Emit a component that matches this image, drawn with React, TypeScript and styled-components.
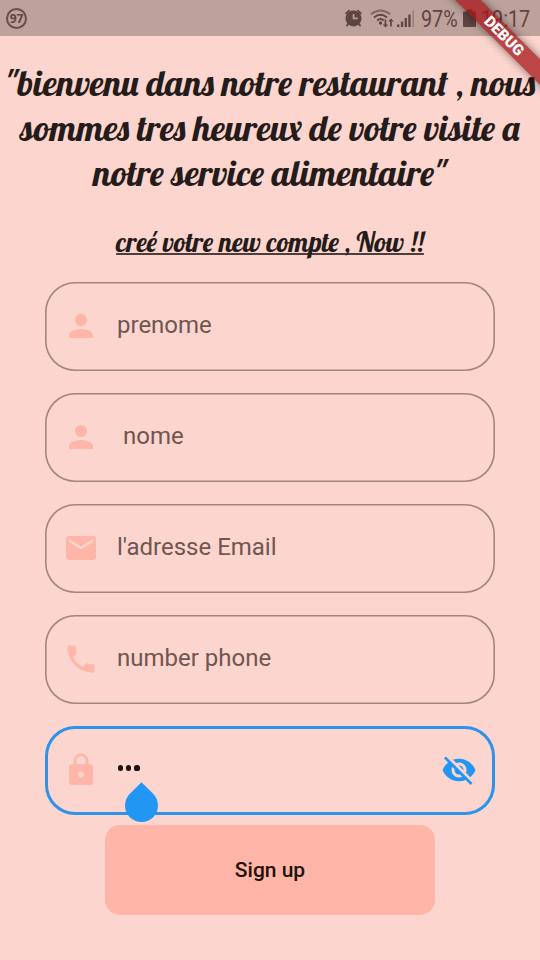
import React, { useLayoutEffect, useRef, useState } from "react";
import styled, { createGlobalStyle } from "styled-components";
import { MdEmail, MdLock, MdPerson, MdPhone, MdVisibilityOff } from "react-icons/md";

const GlobalStyle = createGlobalStyle`
  * { box-sizing: border-box; }
  body { margin: 0; background: #fcd5ce; }
`;

const Screen = styled.div`
  position: relative;
  width: 540px;
  height: 960px;
  overflow: hidden;
  background: #fcd5ce;
  color: #241c1a;
  font-family: Roboto, "Liberation Sans", sans-serif;
`;

const StatusBar = styled.header`
  display: flex;
  align-items: center;
  height: 36px;
  padding: 0 10px 0 6px;
  background: #bfa19b;
  color: #5d4542;
`;

const Spacer = styled.div`
  flex: 1;
`;

const BatteryRing = styled.div`
  display: grid;
  place-items: center;
  width: 21px;
  height: 21px;
  padding-top: 1px;
  border: 2px solid #694e4a;
  border-radius: 50%;
  font: 700 12px/1 "Noto Sans", sans-serif;
`;

const StatusIcon = styled.svg<{ $w: number; $gap: number }>`
  flex: none;
  width: ${(p) => p.$w}px;
  height: 24px;
  margin-right: ${(p) => p.$gap}px;
  fill: currentColor;
`;

const StatusText = styled.div<{ $gap?: number }>`
  margin-right: ${(p) => p.$gap ?? 0}px;
  padding-top: 4px;
  font-size: 23px;
  line-height: 30px;
`;

const FitBox = styled.span<{ $w: number }>`
  display: inline-block;
  width: ${(p) => p.$w}px;
  white-space: nowrap;
  text-align: left;
`;

const FitInner = styled.span`
  display: inline-block;
  transform-origin: 0 50%;
`;

/** Condenses or widens its text to fill the given width. */
function Fit({ width, children }: { width: number; children: string }) {
  const ref = useRef<HTMLSpanElement>(null);
  const [scale, setScale] = useState(1);
  useLayoutEffect(() => {
    if (ref.current) setScale(width / ref.current.offsetWidth);
  }, [width, children]);
  return (
    <FitBox $w={width}>
      <FitInner ref={ref} style={{ transform: `scaleX(${scale})` }}>
        {children}
      </FitInner>
    </FitBox>
  );
}

const Heading = styled.h1`
  margin: 24px 0 0;
  font: 400 36px/45px Lobster, "Liberation Serif", serif;
  text-align: center;
`;

const HeadingLine = styled.span`
  display: block;
  height: 45px;
  white-space: nowrap;
`;

const Subtitle = styled.h2`
  height: 36px;
  margin: 29px 0 0;
  font: 400 27px/36px Lobster, "Liberation Serif", serif;
  text-align: center;
  text-decoration: underline;
  text-decoration-color: #4c3f3b;
  text-decoration-thickness: 1.5px;
  text-decoration-skip-ink: none;
  white-space: nowrap;
`;

const Form = styled.form`
  display: flex;
  flex-direction: column;
  gap: 22.5px;
  width: 450px;
  margin: 22px auto 0;
`;

const Field = styled.label<{ $active?: boolean }>`
  position: relative;
  display: flex;
  align-items: center;
  height: 88.5px;
  padding: 0 18px;
  border-radius: 30px;
  box-shadow: inset 0 0 0 ${(p) => (p.$active ? "3px #2d93ea" : "1.6px #a18580")};
  color: ${(p) => (p.$active ? "#241c1a" : "#705651")};
  font-size: 24px;

  > svg {
    flex: none;
    width: 36px;
    height: 36px;
    margin-bottom: 1px;
    color: #ffb5a7;
  }
  > svg:last-of-type:not(:first-of-type) {
    color: #2196f3;
  }
`;

const FieldText = styled.span<{ $indent?: number }>`
  flex: 1;
  padding: 0 0 2.5px ${(p) => 18 + (p.$indent ?? 0)}px;
  line-height: 28px;
  white-space: nowrap;
`;

const Dots = styled.span`
  display: flex;
  flex: 1;
  gap: 3px;
  padding: 0 0 4.5px 19px;
`;

const Dot = styled.i`
  width: 5.2px;
  height: 5.2px;
  border-radius: 50%;
  background: #1c1210;
`;

const CursorHandle = styled.i`
  position: absolute;
  left: 80px;
  top: 62.5px;
  width: 33px;
  height: 33px;
  border-radius: 0 50% 50% 50%;
  background: #2196f3;
  transform: rotate(45deg);
`;

const SignUp = styled.button`
  display: block;
  width: 330px;
  height: 90px;
  margin: 10.5px auto 0;
  padding: 0;
  border: 0;
  border-radius: 15px;
  background: #ffb5a7;
  color: #24100d;
  font: 500 21px/28px Roboto, sans-serif;
`;

const DebugBanner = styled.div`
  position: absolute;
  left: 424px;
  top: 27px;
  width: 160px;
  height: 18px;
  background: rgba(167, 20, 24, 0.75);
  box-shadow: 0 0 9px rgba(0, 0, 0, 0.5);
  color: #fff;
  font: 900 15.3px/18px Roboto, sans-serif;
  text-align: center;
  transform: rotate(45deg);
`;

const headingLines = [
  '"bienvenu dans notre restaurant , nous',
  "sommes tres heureux de votre visite a",
  'notre service alimentaire"',
];

export default function App() {
  return (
    <Screen>
      <GlobalStyle />
      <StatusBar>
        <BatteryRing>97</BatteryRing>
        <Spacer />
        <StatusIcon $w={19} $gap={7} viewBox="0 0 19 24">
          <path d="M1 7.2 5 3.5l1.2 1.3-4 3.8zM18 7.2 14 3.5l-1.2 1.3 4 3.8z" />
          <path
            fillRule="evenodd"
            d="M9.5 4.5a8 8 0 0 1 6.2 13l1.6 2.2-1.4 1-1.6-1.9a8 8 0 0 1-9.6 0l-1.6 1.9-1.4-1 1.6-2.2a8 8 0 0 1 6.2-13zM8.7 8v5.2h5v-1.7h-3.3V8z"
          />
        </StatusIcon>
        <StatusIcon $w={25} $gap={2} viewBox="0 0 25 24">
          <g fill="none" stroke="currentColor" strokeWidth="1.9">
            <path d="M.8 8.300Q10.500 .5 20.200 8.300" opacity=".65" />
            <path d="M4 11.500Q10.500 6 17 11.500M7.200 14.500Q10.500 11.700 13.700 14.500" />
          </g>
          <circle cx="10.500" cy="17" r="1.7" />
          <path d="M14.600 13.500h1.700v5h2l-2.800 3-2.900-3h2zM20.100 20.500h1.700v-5h2L21 12.500l-2.800 3h1.900z" />
        </StatusIcon>
        <StatusIcon $w={18} $gap={6} viewBox="0 0 18 24">
          <path d="M0 18.500h2.400V21H0zM3.900 15.500h2.300V21H3.900zM7.600 12h2.300v9H7.600zM11.300 8.500h2.300V21h-2.300z" />
          <path d="M15.500 4.500h1.400V21h-1.400z" opacity=".4" />
        </StatusIcon>
        <StatusText $gap={5}>
          <Fit width={37}>97%</Fit>
        </StatusText>
        <StatusIcon $w={13} $gap={5} viewBox="0 0 13 24">
          <path d="M3.500 3.500h6v2H12a1 1 0 0 1 1 1V20a1 1 0 0 1-1 1H1a1 1 0 0 1-1-1V6.500a1 1 0 0 1 1-1h2.500z" />
        </StatusIcon>
        <StatusText>
          <Fit width={49}>19:17</Fit>
        </StatusText>
      </StatusBar>

      <Heading>
        {headingLines.map((line) => (
          <HeadingLine key={line}>{line}</HeadingLine>
        ))}
      </Heading>
      <Subtitle>creé votre new compte , Now !!</Subtitle>

      <Form>
        <Field>
          <MdPerson />
          <FieldText>prenome</FieldText>
        </Field>
        <Field>
          <MdPerson />
          <FieldText $indent={6}>nome</FieldText>
        </Field>
        <Field>
          <MdEmail />
          <FieldText>l'adresse Email</FieldText>
        </Field>
        <Field>
          <MdPhone />
          <FieldText>number phone</FieldText>
        </Field>
        <Field $active>
          <MdLock />
          <Dots>
            <Dot />
            <Dot />
            <Dot />
          </Dots>
          <MdVisibilityOff />
          <CursorHandle />
        </Field>
      </Form>
      <SignUp type="button">Sign up</SignUp>

      <DebugBanner>DEBUG</DebugBanner>
    </Screen>
  );
}
